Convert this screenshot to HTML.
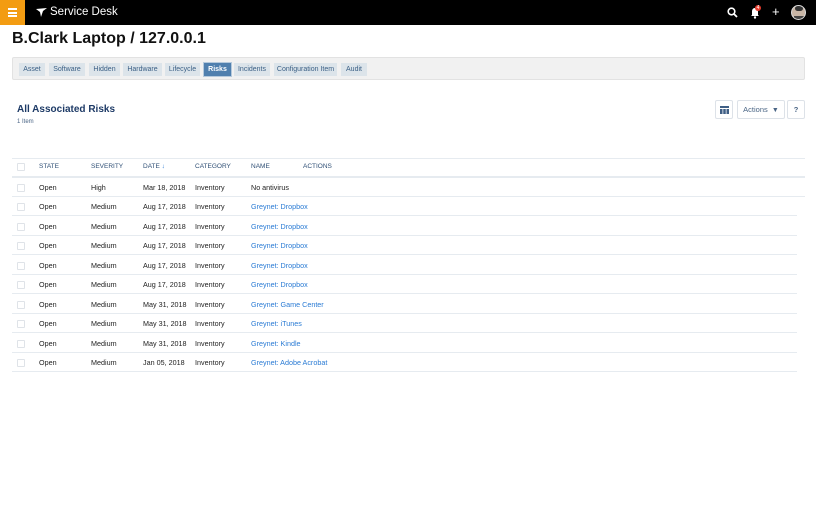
<!DOCTYPE html>
<html><head><style>
*{box-sizing:border-box;margin:0;padding:0}
body{width:816px;height:510px;background:#fff;font-family:"Liberation Sans",sans-serif;position:relative;overflow:hidden;color:#222}
.top{position:absolute;left:0;top:0;width:816px;height:25px;background:#000}
.burger{position:absolute;left:0;top:0;width:25px;height:25px;background:#f39c12}
.burger i{position:absolute;left:8px;width:9px;height:2px;background:#fff}
.brand{position:absolute;left:50px;top:6px;color:#fff;font-size:11.5px}
.title{position:absolute;left:12px;top:30px;font-size:16px;font-weight:bold;color:#111}
.tabs{position:absolute;left:12px;top:57px;width:793px;height:23px;background:#f1f1f1;border:1px solid #e2e2e2;border-radius:2px}
.tab{position:absolute;top:5px;height:13px;background:#dce4ea;color:#3a5f85;font-size:7px;line-height:13px;text-align:center;white-space:nowrap}
.tab.on{background:#4f7fae;color:#fff;font-weight:bold;outline:1px solid #b5c9dc}
h2{position:absolute;left:17px;top:104px;font-size:10px;color:#1d3a66}
.cnt{position:absolute;left:17px;top:119px;font-size:6px;color:#4a6585}
.btn{position:absolute;top:100px;height:19px;border:1px solid #dde2e8;border-radius:2px;background:#fff;color:#4a6585;font-size:7.5px;line-height:17px;text-align:center}
.hl{position:absolute;left:12px;height:1px;background:#e6ebf0}
.r{position:absolute;left:0;font-size:7.2px;color:#222}
.r span{position:absolute;white-space:nowrap}
.cb{position:absolute;left:17px;width:8px;height:8px;border:1px solid #dfe3e8;border-radius:1px}
.h span{color:#2f4f75;font-size:6.5px}
a{color:#2a7bd4;text-decoration:none}
</style></head><body>
<div class="top">
<div class="burger"><i style="top:8px"></i><i style="top:11.5px"></i><i style="top:15px"></i></div>
<svg style="position:absolute;left:36px;top:8px" width="11" height="9" viewBox="0 0 11 9"><path d="M0 1L11 0L7 3L5 9L4 4Z" fill="#fff"/></svg>
<div class="brand">Service Desk</div>
<svg style="position:absolute;left:727px;top:7px" width="11" height="11" viewBox="0 0 11 11"><circle cx="4.5" cy="4.5" r="3.3" stroke="#fff" stroke-width="1.6" fill="none"/><path d="M7 7L10 10" stroke="#fff" stroke-width="1.8"/></svg>
<svg style="position:absolute;left:750px;top:7px" width="10" height="12" viewBox="0 0 10 12"><path d="M5 1C2.5 1 2 3 2 5V8L1 9H9L8 8V5C8 3 7.5 1 5 1Z" fill="#fff"/><circle cx="5" cy="10.5" r="1.2" fill="#fff"/></svg>
<div style="position:absolute;left:755px;top:5px;width:6px;height:6px;border-radius:50%;background:#e53b2c;color:#fff;font-size:5px;line-height:6px;text-align:center">4</div>
<div style="position:absolute;left:772px;top:5px;color:#fff;font-size:13px;line-height:14px">+</div>
<div style="position:absolute;left:791px;top:5px;width:15px;height:15px;border-radius:50%;background:#c9b6a6;border:1px solid #ddd;overflow:hidden"><div style="position:absolute;left:3px;top:0;width:8px;height:5px;background:#333;border-radius:3px"></div><div style="position:absolute;left:2px;top:10px;width:10px;height:6px;background:#444"></div></div>
</div>
<div class="title">B.Clark Laptop / 127.0.0.1</div>
<div class="tabs">
<div class="tab" style="left:6px;width:26px">Asset</div>
<div class="tab" style="left:36px;width:36px">Software</div>
<div class="tab" style="left:76px;width:31px">Hidden</div>
<div class="tab" style="left:110px;width:39px">Hardware</div>
<div class="tab" style="left:152px;width:35px">Lifecycle</div>
<div class="tab on" style="left:191px;width:27px">Risks</div>
<div class="tab" style="left:221px;width:36px">Incidents</div>
<div class="tab" style="left:261px;width:63px">Configuration Item</div>
<div class="tab" style="left:328px;width:26px">Audit</div>
</div>
<h2>All Associated Risks</h2>
<div class="cnt">1 Item</div>
<div class="btn" style="left:715px;width:18px"><svg width="9" height="8" viewBox="0 0 9 8" style="margin-top:5px"><rect width="9" height="2" fill="#3f5f85"/><rect y="3" width="2.5" height="5" fill="#3f5f85"/><rect x="3.25" y="3" width="2.5" height="5" fill="#3f5f85"/><rect x="6.5" y="3" width="2.5" height="5" fill="#3f5f85"/></svg></div>
<div class="btn" style="left:737px;width:48px">Actions &nbsp;<span style="font-size:7px">&#9660;</span></div>
<div class="btn" style="left:787px;width:18px;font-weight:bold">?</div>
<div class="hl" style="top:158px;width:793px"></div>
<div class="r h" style="top:163px"><span class="cb" style="top:0px"></span><span style="left:39px">STATE</span><span style="left:91px">SEVERITY</span><span style="left:143px">DATE <b style="color:#2a7bd4">&#8595;</b></span><span style="left:195px">CATEGORY</span><span style="left:251px">NAME</span><span style="left:303px">ACTIONS</span></div>
<div class="hl" style="top:176px;width:793px;height:1.5px"></div>
<div id="rows"></div>
<script>
var d=[["High","Mar 18, 2018","No antivirus"],["Medium","Aug 17, 2018","Greynet: Dropbox"],["Medium","Aug 17, 2018","Greynet: Dropbox"],["Medium","Aug 17, 2018","Greynet: Dropbox"],["Medium","Aug 17, 2018","Greynet: Dropbox"],["Medium","Aug 17, 2018","Greynet: Dropbox"],["Medium","May 31, 2018","Greynet: Game Center"],["Medium","May 31, 2018","Greynet: iTunes"],["Medium","May 31, 2018","Greynet: Kindle"],["Medium","Jan 05, 2018","Greynet: Adobe Acrobat"]];
var h="";d.forEach(function(r,i){var y=182+i*19.5;var n=i==0?r[2]:'<a>'+r[2]+'</a>';
h+='<div class="r" style="top:'+(y+0.5)+'px"><span class="cb" style="top:1px"></span><span style="left:39px">Open</span><span style="left:91px">'+r[0]+'</span><span style="left:143px">'+r[1]+'</span><span style="left:195px">Inventory</span><span style="left:251px">'+n+'</span></div>';
h+='<div class="hl" style="top:'+(y+13.5)+'px;width:'+(i==0?793:785)+'px"></div>';});
document.getElementById("rows").innerHTML=h;
</script>
</body></html>
